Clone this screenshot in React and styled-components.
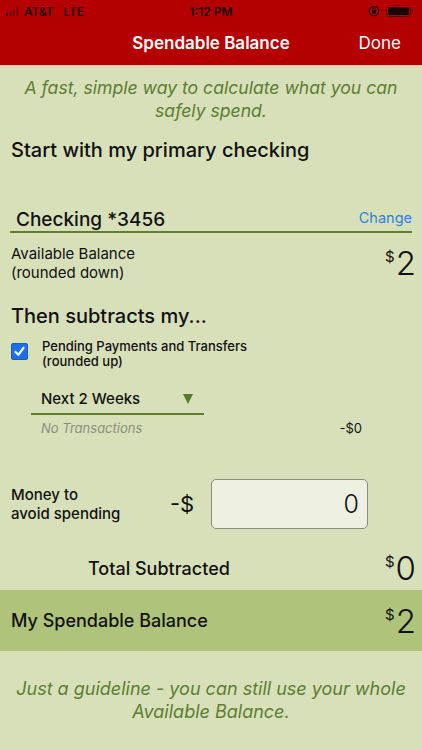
import React from "react";
import styled, { createGlobalStyle } from "styled-components";

const Global = createGlobalStyle`
  html, body { margin: 0; padding: 0; }
  body {
    background: #d8e0b9;
    font-family: Inter, "Liberation Sans", sans-serif;
    color: #111;
  }
`;

const Page = styled.div`
  width: 422px;
  height: 750px;
  background: #d8e0b9;
  overflow: hidden;
  display: flex;
  flex-direction: column;
`;

const Header = styled.div`
  background: #b40000;
  color: #fff;
  height: 65px;
  display: flex;
  flex-direction: column;
`;

const StatusBar = styled.div`
  height: 22px;
  display: flex;
  align-items: center;
  justify-content: space-between;
  padding: 0 8px 0 6px;
  font-size: 12px;
  font-weight: 600;
  color: #1a0000;
  position: relative;
`;

const StatusLeft = styled.div`
  display: flex;
  align-items: center;
  gap: 4px;
  letter-spacing: -0.2px;
`;

const StatusTime = styled.div`
  position: absolute;
  left: 0;
  right: 0;
  text-align: center;
  pointer-events: none;
`;

const StatusRight = styled.div`
  display: flex;
  align-items: center;
  gap: 6px;
`;

const NavBar = styled.div`
  flex: 1;
  display: flex;
  align-items: center;
  justify-content: center;
  position: relative;
  font-size: 17px;
  font-weight: 600;
  padding-bottom: 2px;
`;

const Done = styled.span`
  position: absolute;
  right: 21px;
  font-weight: 400;
  font-size: 17px;
`;

const Note = styled.p`
  margin: 0;
  text-align: center;
  font-style: italic;
  color: #5d7d33;
  font-size: ${p => p.size || 18}px;
  line-height: 23px;
  padding: 0 10px;
`;

const Section = styled.div`
  padding: 0 11px;
`;

const Heading = styled.div`
  font-size: 20px;
  font-weight: 500;
  margin-top: ${p => p.top || 0}px;
  line-height: 26px;
`;

const AccountRow = styled.div`
  display: flex;
  align-items: flex-end;
  justify-content: space-between;
  margin: 45px 10px 0;
  padding: 0 0 0 6px;
  border-bottom: 2px solid #5f7e2e;
`;

const AccountName = styled.span`
  font-size: 19px;
  font-weight: 500;
`;

const ChangeLink = styled.span`
  color: #2d84d8;
  font-size: 14.5px;
  padding-bottom: 5px;
`;

const BalanceRow = styled.div`
  display: flex;
  align-items: center;
  justify-content: space-between;
  padding: 0 6px 0 11px;
  margin-top: ${p => p.top || 0}px;
`;

const Label = styled.div`
  font-size: ${p => p.size || 15}px;
  line-height: ${p => p.lh || 19}px;
  font-weight: ${p => p.weight || 400};
`;

const Amount = styled.div`
  display: flex;
  align-items: flex-start;
  font-size: 33px;
  line-height: 34px;
  font-weight: 300;
`;

const Sup = styled.span`
  font-size: 15px;
  line-height: 15px;
  margin: 3px 1px 0 0;
  font-weight: 400;
`;

const CheckRow = styled.div`
  display: flex;
  align-items: flex-start;
  gap: 14px;
  padding: 0 11px;
  margin-top: 10px;
`;

const CheckBox = styled.div`
  width: 15px;
  height: 15px;
  margin-top: 4px;
  background: #1d6ff2;
  border: 1px solid #2a58a8;
  border-radius: 2px;
  display: flex;
  align-items: center;
  justify-content: center;
`;

const Select = styled.div`
  margin: 20px 0 0 31px;
  width: 173px;
  display: flex;
  align-items: center;
  justify-content: space-between;
  border-bottom: 2px solid #5f7e2e;
  padding: 0 11px 5px 10px;
  box-sizing: border-box;
  font-size: 15px;
  font-weight: 500;
`;

const Triangle = styled.span`
  width: 0;
  height: 0;
  border-left: 5.5px solid transparent;
  border-right: 5.5px solid transparent;
  border-top: 10px solid #577a2b;
`;

const TxRow = styled.div`
  display: flex;
  justify-content: space-between;
  padding: 0 60px 0 41px;
  margin-top: 5px;
  font-size: 13px;
`;

const Muted = styled.span`
  font-style: italic;
  color: #8a8f80;
`;

const AvoidRow = styled.div`
  display: flex;
  align-items: center;
  padding: 0 11px;
  margin-top: 43px;
`;

const AvoidLabel = styled.div`
  width: 159px;
  font-size: 15px;
  line-height: 19px;
  font-weight: 500;
`;

const Minus = styled.div`
  width: 41px;
  font-size: 22px;
  font-weight: 400;
`;

const Input = styled.div`
  width: 157px;
  height: 50px;
  box-sizing: border-box;
  background: #eef0e2;
  border: 1px solid #8a8d80;
  border-radius: 5px;
  display: flex;
  align-items: center;
  justify-content: flex-end;
  padding-right: 8px;
  font-size: 25px;
  font-weight: 300;
`;

const TotalRow = styled.div`
  display: flex;
  align-items: center;
  justify-content: space-between;
  padding: 0 6px 0 88px;
  margin-top: 22px;
  height: 34px;
`;

const Band = styled.div`
  background: #afc47a;
  height: 61px;
  margin-top: 5px;
  display: flex;
  align-items: center;
  justify-content: space-between;
  padding: 0 6px 0 11px;
`;

const Footer = styled.div`
  margin-top: 26px;
`;

function Money({ value }) {
  return (
    <Amount>
      <Sup>$</Sup>
      {value}
    </Amount>
  );
}

function Signal() {
  return (
    <svg width="14" height="9" viewBox="0 0 14 9">
      <rect x="0" y="6" width="2" height="3" fill="#1a0000" />
      <rect x="3.5" y="4.5" width="2" height="4.5" fill="#1a0000" opacity="0.45" />
      <rect x="7" y="2.5" width="2" height="6.5" fill="#1a0000" opacity="0.45" />
      <rect x="10.5" y="0.5" width="2" height="8.5" fill="#1a0000" opacity="0.45" />
    </svg>
  );
}

function Battery() {
  return (
    <svg width="28" height="12" viewBox="0 0 28 12">
      <rect x="0.5" y="0.5" width="24" height="11" rx="2.5" fill="none" stroke="#1a0000" strokeOpacity="0.5" />
      <rect x="2" y="2" width="21" height="8" rx="1.2" fill="#1a0000" />
      <rect x="25.5" y="4" width="1.5" height="4" rx="0.7" fill="#1a0000" fillOpacity="0.5" />
    </svg>
  );
}

function Lock() {
  return (
    <svg width="12" height="12" viewBox="0 0 12 12">
      <circle cx="6" cy="6" r="4.6" fill="none" stroke="#1a0000" strokeWidth="1.4" />
      <rect x="4" y="5" width="4" height="3.4" fill="#1a0000" />
      <path d="M4.8 5 V4 a1.2 1.2 0 0 1 2.4 0 V5" fill="none" stroke="#1a0000" strokeWidth="0.9" />
    </svg>
  );
}

export default function App() {
  return (
    <Page>
      <Global />
      <Header>
        <StatusBar>
          <StatusLeft>
            <Signal />
            <span>AT&amp;T</span>
            <span style={{ marginLeft: 6 }}>LTE</span>
          </StatusLeft>
          <StatusTime>1:12 PM</StatusTime>
          <StatusRight>
            <Lock />
            <Battery />
          </StatusRight>
        </StatusBar>
        <NavBar>
          Spendable Balance
          <Done>Done</Done>
        </NavBar>
      </Header>

      <div style={{ height: 11 }} />
      <Note size={17.6}>A fast, simple way to calculate what you can safely spend.</Note>

      <Section>
        <Heading top={15}>Start with my primary checking</Heading>
      </Section>

      <AccountRow>
        <AccountName>Checking *3456</AccountName>
        <ChangeLink>Change</ChangeLink>
      </AccountRow>

      <BalanceRow top={11}>
        <Label>
          Available Balance
          <br />
          (rounded down)
        </Label>
        <Money value="2" />
      </BalanceRow>

      <Section>
        <Heading top={21}>Then subtracts my...</Heading>
      </Section>

      <CheckRow>
        <CheckBox>
          <svg width="11" height="11" viewBox="0 0 11 11">
            <path d="M1.5 6 L4.3 8.8 L9.5 1.8" fill="none" stroke="#fff" strokeWidth="2.2" strokeLinecap="round" strokeLinejoin="round" />
          </svg>
        </CheckBox>
        <Label size={13} lh={15} weight={500}>
          Pending Payments and Transfers
          <br />
          (rounded up)
        </Label>
      </CheckRow>

      <Select>
        <span>Next 2 Weeks</span>
        <Triangle />
      </Select>

      <TxRow>
        <Muted>No Transactions</Muted>
        <span>-$0</span>
      </TxRow>

      <AvoidRow>
        <AvoidLabel>
          Money to
          <br />
          avoid spending
        </AvoidLabel>
        <Minus>-$</Minus>
        <Input>0</Input>
      </AvoidRow>

      <TotalRow>
        <Label size={18} weight={500}>Total Subtracted</Label>
        <Money value="0" />
      </TotalRow>

      <Band>
        <Label size={18} weight={500}>My Spendable Balance</Label>
        <Money value="2" />
      </Band>

      <Footer>
        <Note size={18}>Just a guideline - you can still use your whole Available Balance.</Note>
      </Footer>
    </Page>
  );
}
